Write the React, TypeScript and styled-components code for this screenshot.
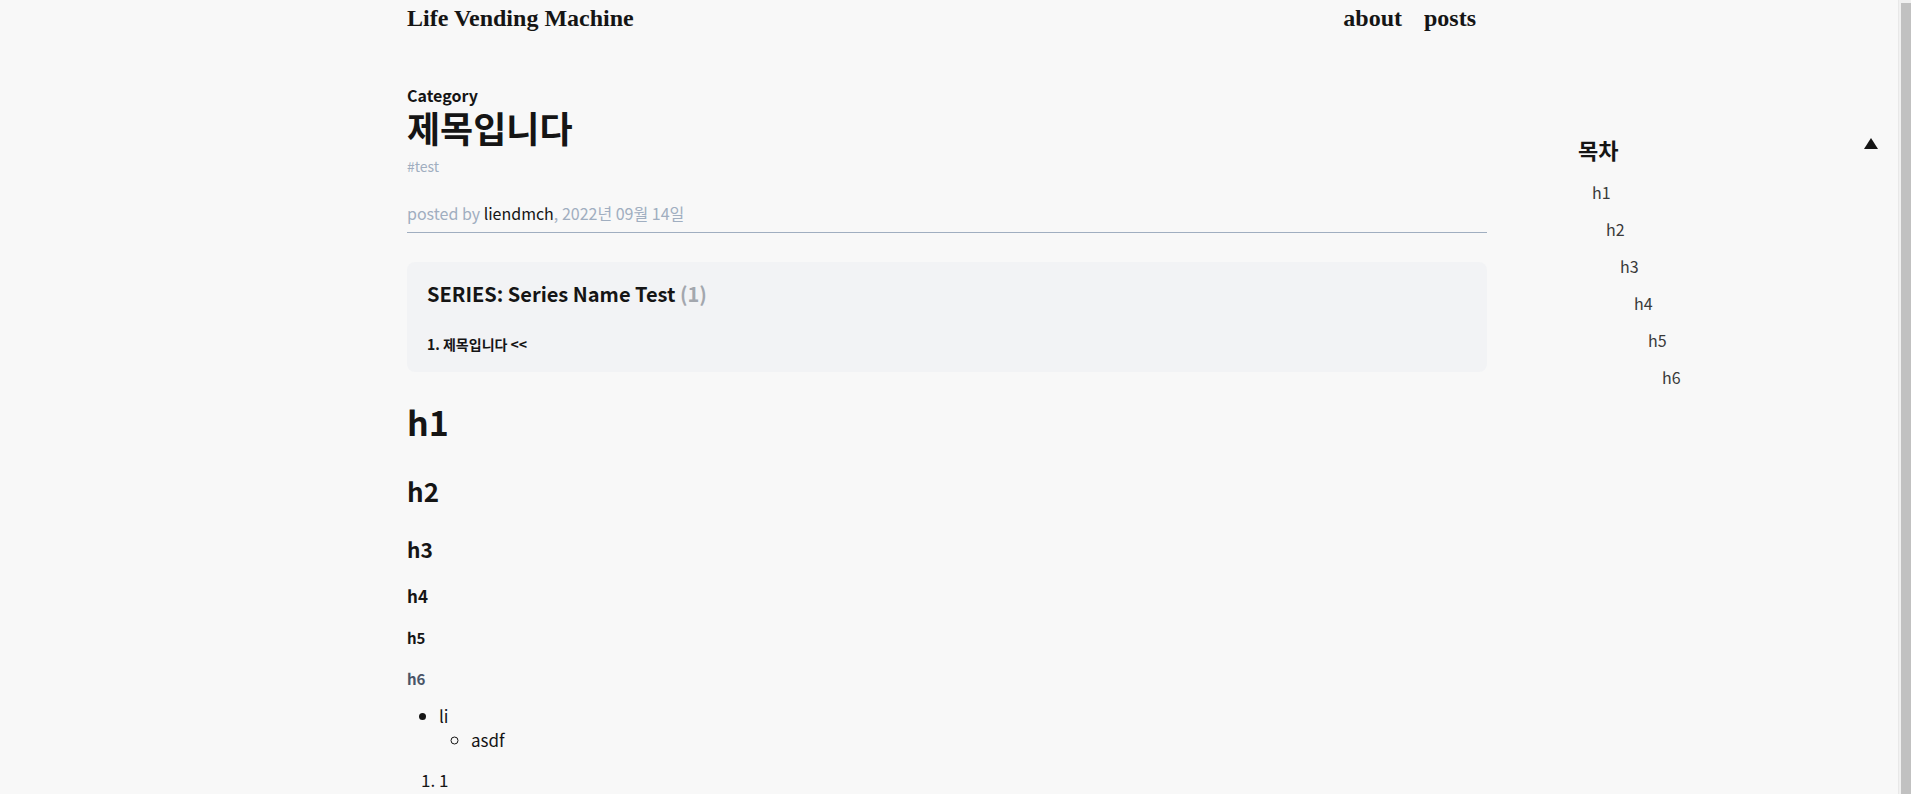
import React from 'react';
import styled, { createGlobalStyle } from 'styled-components';

const GlobalStyle = createGlobalStyle`
  html {
    background: #f8f8f8;
  }
  body {
    margin: 0;
    background: #f8f8f8;
    color: #151515;
    font-family: "Noto Sans CJK KR", "Noto Sans", sans-serif;
  }
`;

const Page = styled.div`
  display: grid;
  grid-template-columns: 407px 1080px 1fr;
  padding-bottom: 8px;
`;

const Main = styled.main`
  grid-column: 2;
  display: flex;
  flex-direction: column;
`;

const Header = styled.header`
  display: flex;
  justify-content: space-between;
  height: 36px;
  line-height: 36px;
  font-family: "Liberation Serif", serif;
  font-weight: 700;
  font-size: 24px;
  color: #151515;
`;

const Nav = styled.nav`
  display: flex;
  gap: 22px;
  padding-right: 11px;
`;

const Category = styled.div`
  margin-top: 51px;
  font-size: 16px;
  line-height: 16px;
  font-weight: 700;
`;

const Title = styled.h1`
  margin: 4px 0 0;
  font-size: 36px;
  line-height: 40px;
  font-weight: 700;
`;

const Tag = styled.div`
  margin-top: 9px;
  font-size: 14px;
  line-height: 20px;
  color: #a0aec0;
`;

const Meta = styled.div`
  margin-top: 25px;
  padding-bottom: 7px;
  border-bottom: 1px solid #a0aec0;
  font-size: 16px;
  line-height: 24px;
  color: #a0aec0;

  b {
    font-weight: 400;
    color: #151515;
  }
`;

const SeriesBox = styled.section`
  margin-top: 29px;
  padding: 18px 20px;
  background: #f2f3f5;
  border-radius: 8px;
`;

const SeriesTitle = styled.div`
  font-size: 20px;
  line-height: 28px;
  font-weight: 700;

  span {
    color: #a3a7ae;
  }
`;

const SeriesItem = styled.div`
  margin-top: 26px;
  font-size: 14px;
  line-height: 20px;
  font-weight: 700;
`;

const Heading = styled.div<{ $size: number; $line: number; $gap: number; $muted?: boolean }>`
  margin: ${p => p.$gap}px 0 0;
  font-size: ${p => p.$size}px;
  line-height: ${p => p.$line}px;
  font-weight: 700;
  color: ${p => (p.$muted ? '#4a5568' : '#151515')};
`;

const List = styled.ul`
  margin: 14px 0 0;
  padding-left: 32px;
  font-size: 17px;
  line-height: 24px;
`;

const SubList = styled.ul`
  margin: 0;
  padding-left: 32px;
  list-style: circle;
`;

const NumList = styled.ol`
  margin: 16px 0 0;
  padding-left: 32px;
  font-size: 17px;
  line-height: 24px;
`;

const Aside = styled.aside`
  grid-column: 3;
  padding-top: 134px;
  padding-left: 91px;
`;

const Toc = styled.div`
  width: 300px;
`;

const TocHead = styled.div`
  display: flex;
  justify-content: space-between;
  align-items: flex-start;
  font-size: 22px;
  line-height: 30px;
  font-weight: 700;

  svg {
    margin-top: 4px;
  }
`;

const TocList = styled.ul`
  list-style: none;
  margin: 10px 0 0;
  padding: 0;
`;

const TocItem = styled.li<{ $level: number }>`
  padding-left: ${p => p.$level * 14}px;
  font-size: 16px;
  line-height: 37px;
  color: #3a3a3a;
`;

const ScrollTrack = styled.div`
  position: fixed;
  top: 0;
  right: 0;
  bottom: 0;
  width: 13px;
  box-sizing: border-box;
  padding: 3px 0 0 2px;
  background: #f1f1f1;
  border-left: 1px solid #e8e8e8;
  display: flex;
`;

const ScrollThumb = styled.div`
  flex: 1;
  background: #c1c1c1;
`;

const headings = [
  { tag: 'h1', size: 34, line: 44, gap: 28 },
  { tag: 'h2', size: 26, line: 34, gap: 30 },
  { tag: 'h3', size: 21, line: 28, gap: 27 },
  { tag: 'h4', size: 17, line: 24, gap: 21 },
  { tag: 'h5', size: 15, line: 22, gap: 19 },
  { tag: 'h6', size: 15, line: 22, gap: 19 },
] as const;

export default function App() {
  return (
    <>
      <GlobalStyle />
      <Page>
        <Main>
          <Header>
            <span>Life Vending Machine</span>
            <Nav>
              <span>about</span>
              <span>posts</span>
            </Nav>
          </Header>

          <Category>Category</Category>
          <Title>제목입니다</Title>
          <Tag>#test</Tag>
          <Meta>
            posted by <b>liendmch</b>, 2022년 09월 14일
          </Meta>

          <SeriesBox>
            <SeriesTitle>
              SERIES: Series Name Test <span>(1)</span>
            </SeriesTitle>
            <SeriesItem>1. 제목입니다 &lt;&lt;</SeriesItem>
          </SeriesBox>

          {headings.map(h => (
            <Heading
              key={h.tag}
              as={h.tag}
              $size={h.size}
              $line={h.line}
              $gap={h.gap}
              $muted={h.tag === 'h6'}
            >
              {h.tag}
            </Heading>
          ))}

          <List>
            <li>
              li
              <SubList>
                <li>asdf</li>
              </SubList>
            </li>
          </List>
          <NumList>
            <li>1</li>
          </NumList>
        </Main>

        <Aside>
          <Toc>
            <TocHead>
              <span>목차</span>
              <svg width="14" height="11" viewBox="0 0 14 11">
                <polygon points="7,0 14,11 0,11" fill="#151515" />
              </svg>
            </TocHead>
            <TocList>
              {headings.map((h, i) => (
                <TocItem key={h.tag} $level={i + 1}>
                  {h.tag}
                </TocItem>
              ))}
            </TocList>
          </Toc>
        </Aside>
      </Page>
      <ScrollTrack>
        <ScrollThumb />
      </ScrollTrack>
    </>
  );
}
